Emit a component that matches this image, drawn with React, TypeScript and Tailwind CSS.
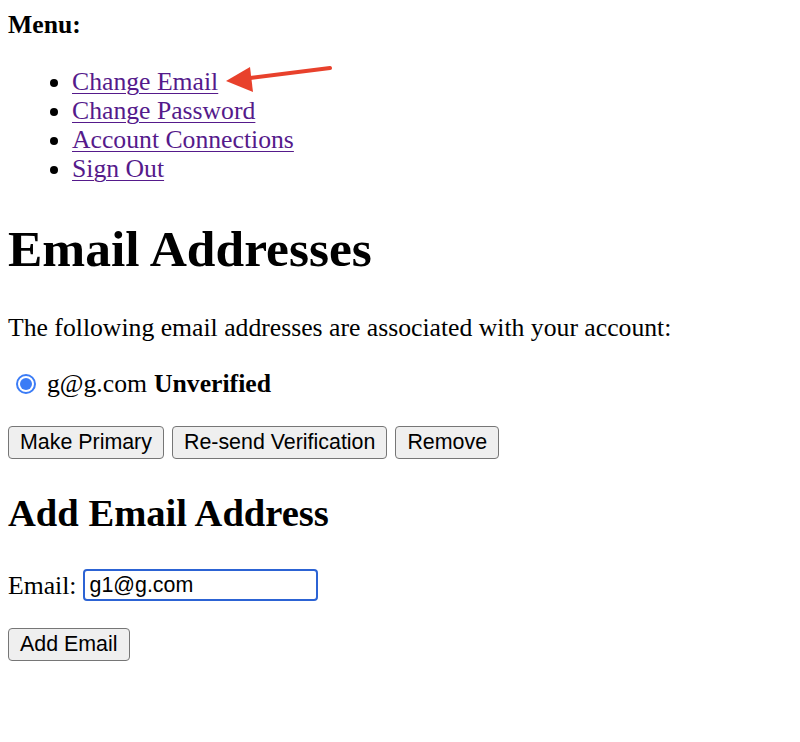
export default function App() {
  const serif = "font-['Liberation_Serif','Times_New_Roman',serif]";
  const sans = "font-['Liberation_Sans',Arial,sans-serif]";
  const btn = `${sans} h-[33px] px-[11px] text-[21.4px] leading-none text-black bg-[#efefef] border border-[#767676] rounded-[4px]`;

  return (
    <div className={`relative min-h-[742px] w-full bg-white px-2 pt-[10px] text-black ${serif} text-[25.7px] leading-[29px]`}>
      <div className="font-bold">Menu:</div>

      <ul className="mt-[28px] list-disc pl-[64px]">
        {["Change Email", "Change Password", "Account Connections", "Sign Out"].map((t) => (
          <li key={t}>
            <a href="#" className="text-[#551a8b] underline underline-offset-[3px] decoration-1">
              {t}
            </a>
          </li>
        ))}
      </ul>

      {/* red annotation arrow */}
      <svg className="absolute left-[220px] top-[60px]" width="120" height="40" viewBox="0 0 120 40">
        <line x1="110" y1="8" x2="30" y2="18" stroke="#e8412c" strokeWidth="4" strokeLinecap="round" />
        <polygon points="6,21 30,7 33,32" fill="#e8412c" />
      </svg>

      <h1 className="mt-[36px] text-[51.5px] leading-[59px] font-bold">Email Addresses</h1>

      <p className="mt-[35px]">The following email addresses are associated with your account:</p>

      <div className="mt-[27px] flex items-center">
        <span className="ml-[8px] mr-[11px] flex h-[20px] w-[20px] items-center justify-center rounded-full border-2 border-[#3b7cf6]">
          <span className="h-[12px] w-[12px] rounded-full bg-[#3b7cf6]" />
        </span>
        <span>g@g.com</span>
        <span className="ml-[7px] font-bold">Unverified</span>
      </div>

      <div className="mt-[28px] flex gap-[8px]">
        <button className={btn}>Make Primary</button>
        <button className={btn}>Re-send Verification</button>
        <button className={btn}>Remove</button>
      </div>

      <h2 className="mt-[32px] text-[38.6px] leading-[44px] font-bold">Add Email Address</h2>

      <div className="mt-[34px] flex items-center">
        <span>Email:</span>
        <div className={`${sans} ml-[7px] flex h-[32px] w-[235px] items-center rounded-[4px] border-2 border-[#2c63d4] pl-[4px] text-[21.4px]`}>
          g1@g.com
        </div>
      </div>

      <div className="mt-[27px]">
        <button className={`${btn} h-[32px]`}>Add Email</button>
      </div>
    </div>
  );
}
